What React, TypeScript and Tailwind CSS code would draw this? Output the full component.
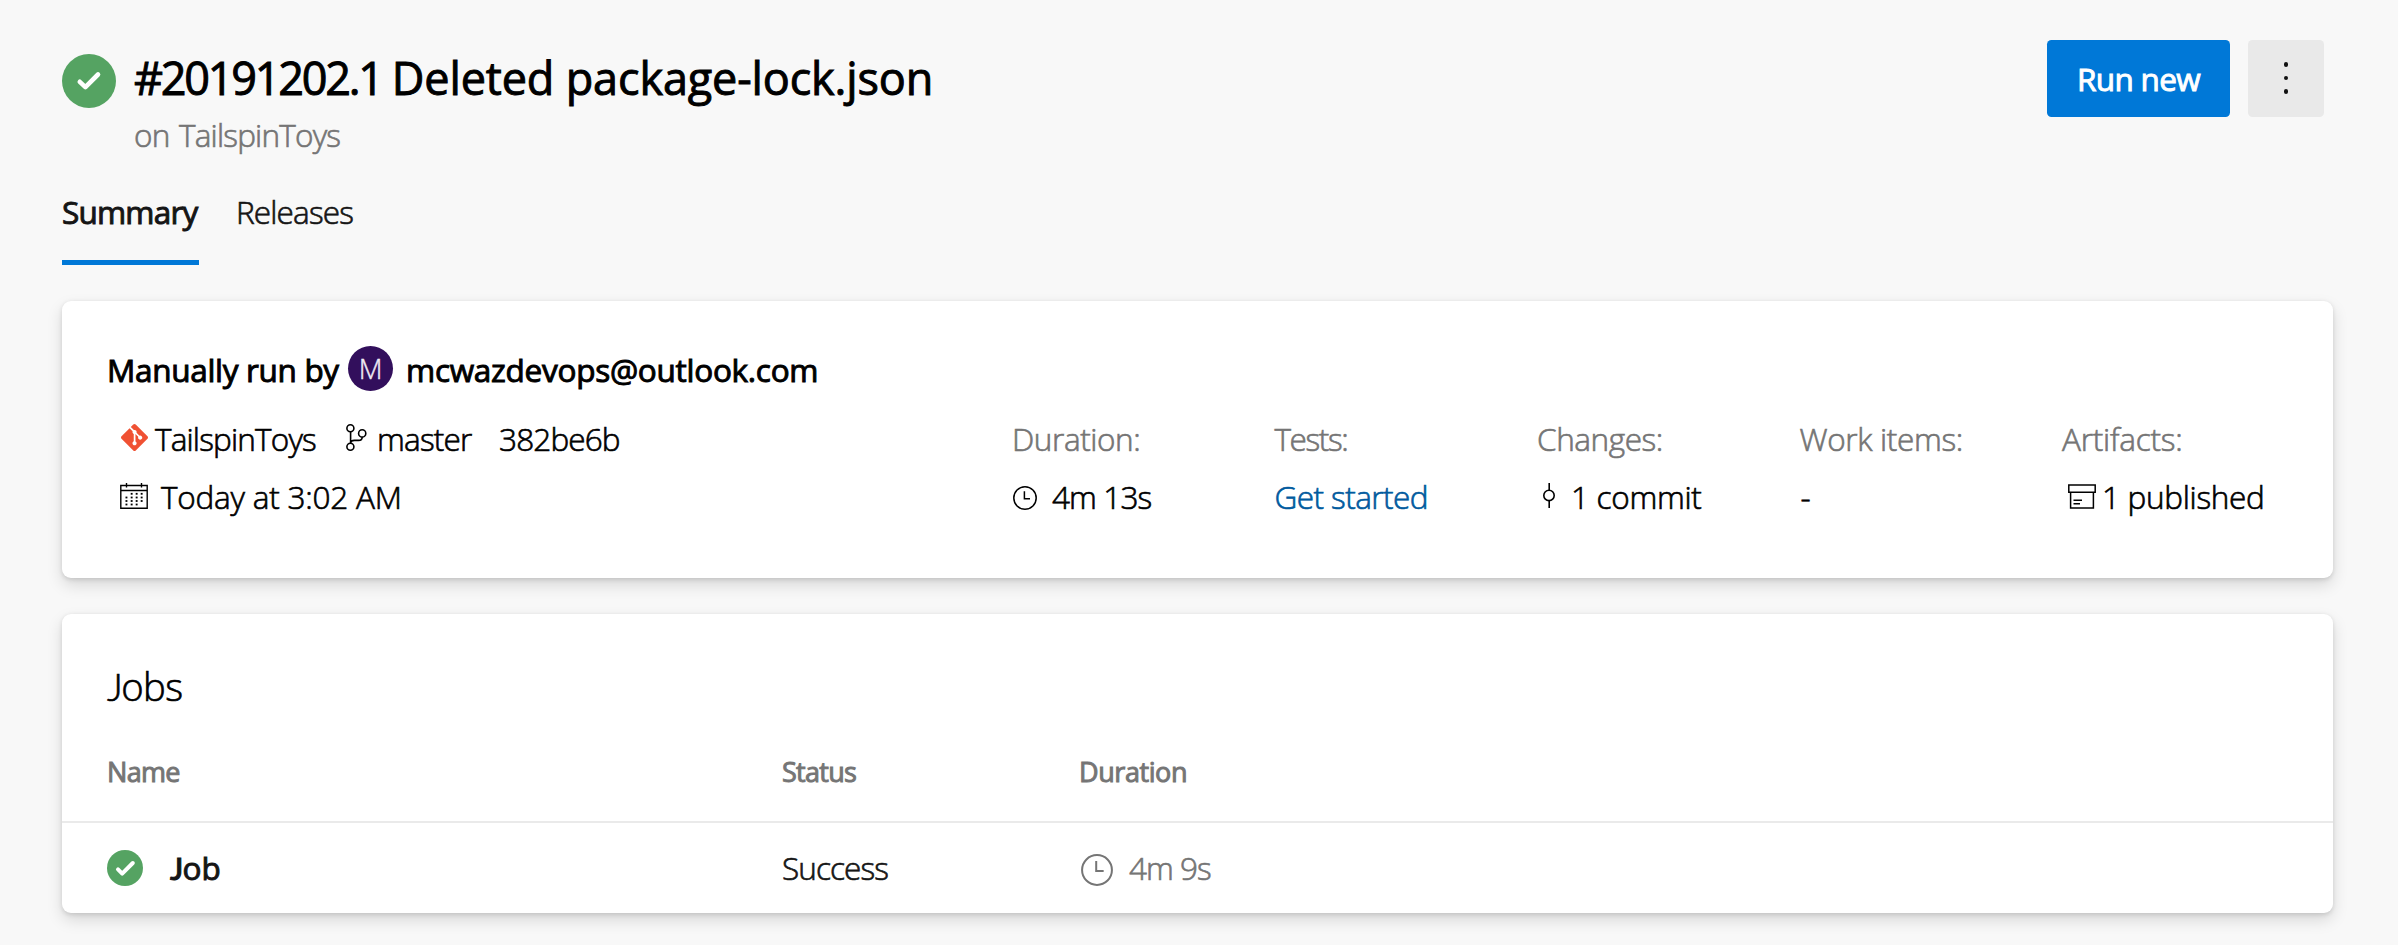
import type { ReactNode } from "react";
import { SiGit } from "react-icons/si";

const regular = "font-light [-webkit-text-stroke:0.65px] whitespace-pre";
const strong = "font-medium [-webkit-text-stroke:0.95px] whitespace-pre";
const body = "text-[31.5px] leading-[43px]";

function LargeCheck() {
  return (
    <svg viewBox="0 0 54 54" className="mt-[14px] size-[54px] shrink-0">
      <circle cx="27" cy="27" r="27" fill="#55a362" />
      <path d="M17.8 27.8 L23.4 33.1 L36 20.5" fill="none" stroke="#fff" strokeWidth="4.6" strokeLinecap="round" strokeLinejoin="round" />
    </svg>
  );
}

function SmallCheck() {
  return (
    <svg viewBox="0 0 36 36" className="mt-[4px] size-9 shrink-0">
      <circle cx="18" cy="18" r="18" fill="#55a362" />
      <path d="M11 19.4 L15.2 23.6 L25.8 13" fill="none" stroke="#fff" strokeWidth="4" strokeLinecap="round" strokeLinejoin="round" />
    </svg>
  );
}

function ClockIcon({ className }: { className: string }) {
  return (
    <svg viewBox="0 0 24 24" fill="none" stroke="currentColor" strokeWidth="1.5" className={className}>
      <circle cx="12" cy="12" r="11.2" />
      <path d="M11.4 5.2 V12.8 H17" />
    </svg>
  );
}

function BranchIcon() {
  return (
    <svg viewBox="0 0 21 27" fill="none" stroke="currentColor" strokeWidth="1.6" className="mt-[7px] h-[27px] w-[21px] shrink-0">
      <circle cx="4.4" cy="4.3" r="3.5" />
      <circle cx="4.4" cy="22.7" r="3.5" />
      <circle cx="16.2" cy="9.4" r="3.6" />
      <path d="M4.6 7.8 V19.2 M16.2 13 C16.2 15.6 14.6 16.4 12.6 16.4 H8.4 C6 16.4 4.6 17.4 4.6 19.2" />
    </svg>
  );
}

const calendarDots = [
  [11.6, 10.8], [16.6, 10.8], [21.6, 10.8],
  [6.4, 14.5], [11.6, 14.5], [16.6, 14.5], [21.6, 14.5],
  [6.4, 18], [11.6, 18], [16.6, 18], [21.6, 18],
  [6.4, 21.5], [11.6, 21.5], [16.6, 21.5],
];

function CalendarIcon() {
  return (
    <svg viewBox="0 0 28 26" fill="none" stroke="currentColor" strokeWidth="1.4" className="mt-[8px] h-[26px] w-[28px] shrink-0">
      <path d="M0.8 2.5 H27.2 V25.2 H0.8 Z M0.8 7.5 H27.2 M6.5 0 V4.6 M21.5 0 V4.6" />
      {calendarDots.map(([x, y]) => (
        <rect key={`${x}-${y}`} x={x - 0.9} y={y - 0.9} width="1.9" height="1.8" fill="currentColor" stroke="none" />
      ))}
    </svg>
  );
}

function CommitIcon() {
  return (
    <svg viewBox="0 0 12 25" fill="none" stroke="currentColor" strokeWidth="1.6" className="mt-[8px] ml-[6px] h-[25px] w-[12px] shrink-0">
      <circle cx="6" cy="12.4" r="5.2" />
      <path d="M6.2 0 V7.2 M6.2 17.6 V25" />
    </svg>
  );
}

function ArchiveIcon() {
  return (
    <svg viewBox="0 0 28 25" fill="none" stroke="currentColor" strokeWidth="1.5" className="mt-[9px] ml-[6px] h-[25px] w-[28px] shrink-0">
      <path d="M0.8 1 H27.2 V8.2 H0.8 Z M2.6 8.2 V24 H25.4 V8.2 M5.5 16.2 H14 M5.5 19.8 H12" />
    </svg>
  );
}

function Stat({ label, children }: { label: ReactNode; children: ReactNode }) {
  return (
    <div className="flex flex-col gap-[15px]">
      <div className="text-[#757575]">{label}</div>
      <div className="flex">{children}</div>
    </div>
  );
}

const card = "rounded-[9px] bg-white shadow-[0_7px_16px_rgba(0,0,0,0.132),0_1.35px_4px_rgba(0,0,0,0.108)]";

export default function App() {
  return (
    <div className="h-[945px] w-[2398px] overflow-hidden bg-[#f8f8f8] pt-[40px] pr-[65px] pl-[62px] font-['Open_Sans','Noto_Sans',sans-serif] text-black">
      <header className="flex h-[116px] items-start pr-[9px]">
        <LargeCheck />
        <div className="mt-[7px] ml-[18px] flex flex-col gap-[5px]">
          <h1 className={`${strong} text-[45px] leading-[61px] tracking-[-0.14px]`}>
            <span className="-mr-[1.5px] tracking-[-2.25px]">#20191202.1</span> Deleted package-lock.json
          </h1>
          <div className={`${regular} ${body} tracking-[-0.78px] text-[#757575] [word-spacing:2px]`}>on TailspinToys</div>
        </div>
        <button className={`${strong} ${body} ml-auto h-[77px] w-[183px] rounded-[4.5px] bg-[#0078d7] pl-[30px] text-left tracking-[-0.68px] text-white`}>Run new</button>
        <button aria-label="More actions" className="ml-[18px] flex h-[77px] w-[76px] flex-col items-center gap-[9px] rounded-[4.5px] bg-[#e9e9e9] pt-[22px]">
          <i className="size-[4.5px] rounded-full bg-[#111]" />
          <i className="size-[4.5px] rounded-full bg-[#111]" />
          <i className="size-[4.5px] rounded-full bg-[#111]" />
        </button>
      </header>

      <nav className={`${body} mt-[34px] flex h-[75px] gap-[37px]`}>
        <div className={`${strong} w-[137px] border-b-[5px] border-[#0078d7] tracking-[-0.8px] text-[#151515]`}>Summary</div>
        <div className={`${regular} tracking-[-0.85px] text-[#151515]`}>Releases</div>
      </nav>

      <section className={`${card} ${body} mt-[36px] h-[277px] pt-[45px] pl-[45px]`}>
        <div className="flex h-[71px]">
          <div className={`${strong} mt-[2px] w-[241px] tracking-[-0.32px]`}>Manually run by</div>
          <div className="flex size-[45px] items-center justify-center rounded-full bg-[#320f5c] text-[27.5px] leading-[45px] font-light text-[#efebf3] [-webkit-text-stroke:0.4px]">M</div>
          <div className={`${strong} mt-[2px] ml-[13px] tracking-[-0.27px]`}>mcwazdevops@outlook.com</div>
        </div>
        <div className="flex">
          <div className="flex w-[905px] flex-col gap-[15px]">
            <div className="flex">
              <SiGit className="mt-[7px] ml-[14px] size-[27px] text-[#f05133]" />
              <div className={`${regular} ml-[7px] w-[191px] tracking-[-0.82px]`}>TailspinToys</div>
              <BranchIcon />
              <div className={`${regular} ml-[10px] w-[122px] tracking-[-0.78px]`}>master</div>
              <div className={`${regular} tracking-[-0.85px]`}>382be6b</div>
            </div>
            <div className="flex pl-[13px]">
              <CalendarIcon />
              <div className={`${regular} ml-[13px] tracking-[-0.22px]`}>Today at 3:02 AM</div>
            </div>
          </div>
          <div className="grid grid-cols-[repeat(5,262.5px)]">
            <Stat label={<span className={`${regular} tracking-[-0.4px]`}>Duration:</span>}>
              <ClockIcon className="mt-[11px] ml-px size-6 shrink-0" />
              <span className={`${regular} ml-[15px] tracking-[-0.88px]`}>4m 13s</span>
            </Stat>
            <Stat label={<span className={`${regular} tracking-[-1.4px]`}>Tests:</span>}>
              <a className={`${regular} tracking-[-0.56px] text-[#005a9e]`}>Get started</a>
            </Stat>
            <Stat label={<span className={`${regular} tracking-[-0.42px]`}>Changes:</span>}>
              <CommitIcon />
              <span className={`${regular} ml-[16px] tracking-[-0.3px]`}>1 commit</span>
            </Stat>
            <Stat label={<span className={`${regular} tracking-[-0.35px]`}>Work items:</span>}>
              <span className={`${regular} ml-px`}>-</span>
            </Stat>
            <Stat label={<span className={`${regular} tracking-[-0.22px]`}>Artifacts:</span>}>
              <ArchiveIcon />
              <span className={`${regular} ml-[6px] tracking-[-0.3px]`}>1 published</span>
            </Stat>
          </div>
        </div>
      </section>

      <section className={`${card} mt-[36px] h-[299px] pt-[46px]`}>
        <h2 className={`${regular} h-[52px] pl-[45px] text-[38.25px] leading-[52px] tracking-[-0.7px]`}>
          <span className="font-['Lato'] font-light tracking-[-1.5px]">J</span>obs
        </h2>
        <div className="mt-[41px] grid h-[70px] grid-cols-[675px_297px_1fr] border-b-2 border-[#eaeaea] pl-[45px] text-[27px] leading-[37px] text-[#757575]">
          <div className={`${strong} tracking-[-0.7px]`}>Name</div>
          <div className={`${strong} tracking-[-0.7px]`}>Status</div>
          <div className={`${strong} tracking-[-0.42px]`}>Duration</div>
        </div>
        <div className={`${body} grid grid-cols-[675px_297px_1fr] pt-[23px] pl-[45px]`}>
          <div className="flex">
            <SmallCheck />
            <div className={`${strong} ml-[27px] h-[43px] tracking-[0.1px] text-[#151515]`}>
              <span className="font-['Lato'] tracking-[-1px]">J</span>ob
            </div>
          </div>
          <div className={`${regular} tracking-[-0.9px] text-[#151515]`}>Success</div>
          <div className="flex text-[#757575]">
            <ClockIcon className="mt-[8px] ml-[2px] size-8 shrink-0" />
            <div className={`${regular} ml-[16px] tracking-[-1px]`}>4m 9s</div>
          </div>
        </div>
      </section>
    </div>
  );
}
